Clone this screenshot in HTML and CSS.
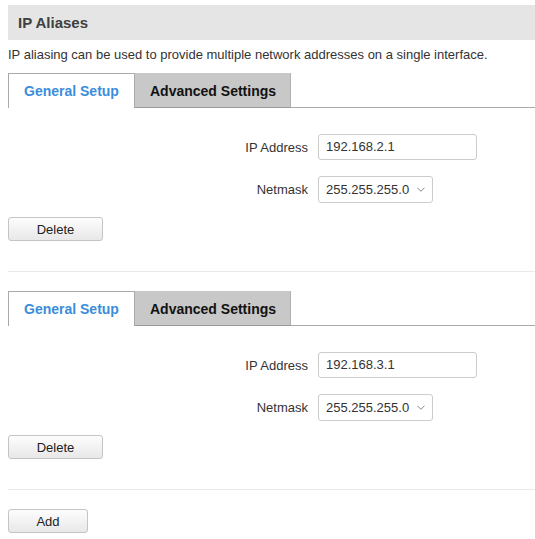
FILE: index.html
```html
<!DOCTYPE html>
<html>
<head>
<meta charset="utf-8">
<link rel="stylesheet" href="styles.css">
</head>
<body>
<div class="page">
  <div class="header">IP Aliases</div>
  <p class="desc">IP aliasing can be used to provide multiple network addresses on a single interface.</p>

  <div class="section">
    <div class="tabs">
      <div class="tab active">General Setup</div>
      <div class="tab">Advanced Settings</div>
      <div class="tab-rest"></div>
    </div>
    <div class="form">
      <div class="row">
        <label class="label">IP Address</label>
        <div class="input">192.168.2.1</div>
      </div>
      <div class="row">
        <label class="label">Netmask</label>
        <div class="select"><span>255.255.255.0</span><svg class="chev" width="11" height="7" viewBox="0 0 11 7"><path d="M0.5 1 L5.5 6 L10.5 1" fill="none" stroke="#666" stroke-width="1.1"/></svg></div>
      </div>
    </div>
    <button class="btn btn-delete">Delete</button>
  </div>
  <hr class="sep">

  <div class="section">
    <div class="tabs">
      <div class="tab active">General Setup</div>
      <div class="tab">Advanced Settings</div>
      <div class="tab-rest"></div>
    </div>
    <div class="form">
      <div class="row">
        <label class="label">IP Address</label>
        <div class="input">192.168.3.1</div>
      </div>
      <div class="row">
        <label class="label">Netmask</label>
        <div class="select"><span>255.255.255.0</span><svg class="chev" width="11" height="7" viewBox="0 0 11 7"><path d="M0.5 1 L5.5 6 L10.5 1" fill="none" stroke="#666" stroke-width="1.1"/></svg></div>
      </div>
    </div>
    <button class="btn btn-delete">Delete</button>
  </div>
  <hr class="sep">

  <button class="btn btn-add">Add</button>
</div>
</body>
</html>
```

FILE: styles.css
```css
html, body {
  margin: 0;
  padding: 0;
  background: #fff;
}
body {
  font-family: "Liberation Sans", Arial, sans-serif;
  color: #333;
}
.page {
  padding: 5px 0 0 8px;
}
.header {
  height: 35px;
  line-height: 35px;
  background: #e5e5e5;
  padding-left: 10px;
  font-size: 15px;
  font-weight: bold;
  color: #404040;
}
.desc {
  margin: 0;
  height: 33px;
  line-height: 29px;
  font-size: 13px;
  color: #333;
  white-space: nowrap;
}
.tabs {
  display: flex;
  height: 35px;
}
.tab {
  box-sizing: border-box;
  height: 35px;
  line-height: 35px;
  font-size: 14px;
  font-weight: bold;
  white-space: nowrap;
  flex: none;
}
.tab.active {
  width: 127px;
  background: #fff;
  color: #3a8ddb;
  border: 1px solid #aaa;
  border-bottom: none;
  padding-left: 15px;
}
.tab:not(.active) {
  width: 156px;
  padding-left: 15px;
  background: #c8c8c8;
  color: #111;
  border-top: 1px solid #c8c8c8;
  border-right: 1px solid #b0b0b0;
  border-bottom: 1px solid #999;
}
.tab-rest {
  flex: 1;
  border-bottom: 1px solid #aaa;
}
.form {
  padding-top: 26px;
  display: flex;
  flex-direction: column;
  gap: 16px;
}
.row {
  display: flex;
  align-items: center;
  gap: 10px;
}
.label {
  width: 300px;
  text-align: right;
  font-size: 13px;
  color: #333;
}
.input {
  box-sizing: border-box;
  width: 159px;
  height: 26px;
  line-height: 24px;
  border: 1px solid #ccc;
  border-radius: 3px;
  padding-left: 7px;
  font-size: 13px;
  color: #333;
}
.select {
  box-sizing: border-box;
  width: 115px;
  height: 27px;
  border: 1px solid #ccc;
  border-radius: 3px;
  padding: 0 7px 0 7px;
  display: flex;
  align-items: center;
  gap: 8px;
  font-size: 13px;
  color: #333;
}
.chev {
  display: block;
}
.btn {
  display: block;
  box-sizing: border-box;
  height: 24px;
  border: 1px solid #c4c4c4;
  border-radius: 3px;
  background: linear-gradient(#fdfdfd, #e8e8e8);
  font-family: "Liberation Sans", Arial, sans-serif;
  font-size: 13px;
  color: #222;
  padding: 0;
}
.btn-delete {
  width: 95px;
  margin-top: 14px;
}
.btn-add {
  width: 80px;
}
.sep {
  border: none;
  border-top: 1px solid #eaeaea;
  margin: 30px 0 19px 0;
  height: 0;
}
```
